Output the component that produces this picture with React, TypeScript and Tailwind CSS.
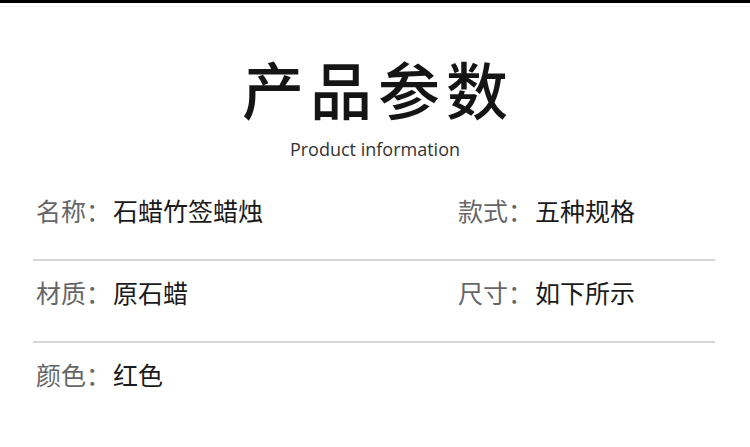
import React from 'react';

const rows = [
  [
    { label: '名称：', value: '石蜡竹签蜡烛' },
    { label: '款式：', value: '五种规格' },
  ],
  [
    { label: '材质：', value: '原石蜡' },
    { label: '尺寸：', value: '如下所示' },
  ],
  [{ label: '颜色：', value: '红色' }],
];

const Field: React.FC<{ label: string; value: string }> = ({ label, value }) => (
  <div className="flex items-center text-[25px] leading-none">
    <span className="text-[#666666]">{label}</span>
    <span className="ml-[2px] text-[#1a1a1a]">{value}</span>
  </div>
);

const App: React.FC = () => {
  return (
    <div
      className="w-[750px] h-[447px] bg-white overflow-hidden flex flex-col"
      style={{ fontFamily: '"Noto Sans CJK SC", "Noto Sans", sans-serif' }}
    >
      <div className="h-[3px] bg-black" />
      <div className="h-[1px] bg-[#f2f2f2] mt-[3px]" />

      <div className="flex flex-col items-center mt-[50px]">
        <h1 className="text-[62px] font-medium leading-none tracking-[6px] text-[#151515] pl-[6px]">产品参数</h1>
        <p className="mt-[21px] text-[18px] leading-none text-[#333333]" style={{ fontFamily: '"Open Sans", "Noto Sans", sans-serif' }}>
          Product information
        </p>
      </div>

      <div className="mt-[35px] flex flex-col">
        {rows.map((row, i) => (
          <div key={i} className="flex flex-col">
            <div className="grid grid-cols-[422px_1fr] pl-[36px] h-[34px] items-center">
              {row.map((f) => (
                <Field key={f.label} label={f.label} value={f.value} />
              ))}
            </div>
            {i < rows.length - 1 && (
              <div className="mx-[33px] w-[682px] h-[2px] bg-[#d6d6d6] mt-[32px] mb-[14px]" />
            )}
          </div>
        ))}
      </div>
    </div>
  );
};

export default App;
